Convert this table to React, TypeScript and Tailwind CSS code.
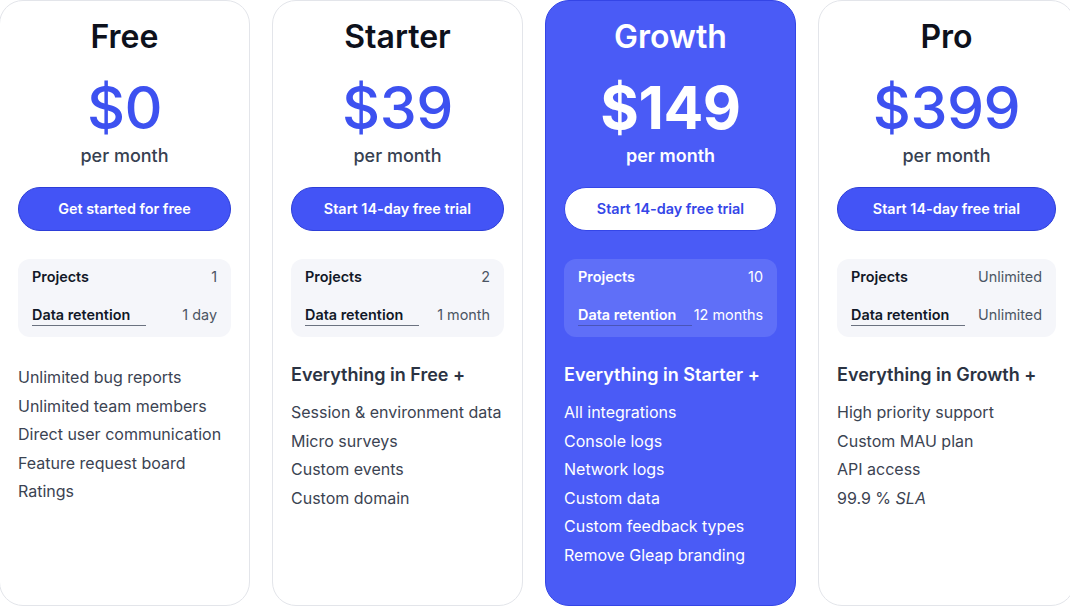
import clsx from 'clsx';

type Plan = {
    name: string;
    price: string;
    cta: string;
    projects: string;
    retention: string;
    heading?: string;
    features: React.ReactNode[];
    featured?: boolean;
    wide?: boolean;
};

const plans: Plan[] = [
    {
        name: "Free",
        price: "$0",
        cta: "Get started for free",
        projects: "1",
        retention: "1 day",
        features: ["Unlimited bug reports", "Unlimited team members", "Direct user communication", "Feature request board", "Ratings"],
    },
    {
        name: "Starter",
        price: "$39",
        cta: "Start 14-day free trial",
        projects: "2",
        retention: "1 month",
        heading: "Everything in Free +",
        features: ["Session & environment data", "Micro surveys", "Custom events", "Custom domain"],
    },
    {
        name: "Growth",
        price: "$149",
        cta: "Start 14-day free trial",
        projects: "10",
        retention: "12 months",
        heading: "Everything in Starter +",
        featured: true,
        features: ["All integrations", "Console logs", "Network logs", "Custom data", "Custom feedback types", "Remove Gleap branding"],
    },
    {
        name: "Pro",
        price: "$399",
        cta: "Start 14-day free trial",
        projects: "Unlimited",
        retention: "Unlimited",
        heading: "Everything in Growth +",
        wide: true,
        features: ["High priority support", "Custom MAU plan", "API access", <>99.9 % <i>SLA</i></>],
    },
];

function PlanCard({ plan }: { plan: Plan }) {
    const f = plan.featured;
    return (
        <div className={clsx("h-[606px] shrink-0 rounded-[24px] border px-[18px] pt-[17px] flex flex-col items-stretch", {
            "bg-[#4a5bf6] border-[#3445e6]": f,
            "bg-white border-[#e3e5ea]": !f,
            "w-[257px]": plan.wide,
            "w-[251px]": !plan.wide,
        })}>
            <h2 className={clsx("text-center text-[32px] leading-[38px] font-semibold", f ? "text-white" : "text-[#0d111c]")}>{plan.name}</h2>
            <div className={clsx("mt-[21px] text-center text-[59px] leading-[62px] tracking-[-0.5px]", f ? "text-white font-bold" : "text-[#3d51f0] font-medium")}>{plan.price}</div>
            <div className={clsx("mt-[5px] text-center text-[18px] leading-[24px]", f ? "text-white font-semibold" : "text-[#374151] font-medium")}>per month</div>
            <button className={clsx("mt-[19px] h-[44px] rounded-full border text-[14.4px] font-semibold", {
                "bg-white text-[#3446e8] border-[#3446e8]": f,
                "bg-[#4354f6] text-white border-[#2d3ed8]": !f,
            })}>{plan.cta}</button>
            <div className={clsx("mt-[28px] rounded-[12px] px-[14px] pt-[8px] pb-[11px] flex flex-col gap-[18px] text-[14.4px] leading-[20px]", f ? "bg-[#5f6ff8]" : "bg-[#f5f6fa]")}>
                <div className="flex justify-between">
                    <span className={clsx("font-semibold", f ? "text-white" : "text-[#111827]")}>Projects</span>
                    <span className={f ? "text-white" : "text-[#4b5563]"}>{plan.projects}</span>
                </div>
                <div className="flex justify-between">
                    <span className={clsx("w-[114px] border-b font-semibold", f ? "text-white border-[#4a55b8]" : "text-[#111827] border-[#6b7280]")}>Data retention</span>
                    <span className={f ? "text-white" : "text-[#4b5563]"}>{plan.retention}</span>
                </div>
            </div>
            {plan.heading ? (
                <>
                    <div className={clsx("mt-[25px] text-[18px] leading-[26px] font-semibold", f ? "text-white" : "text-[#2b3343]")}>{plan.heading}</div>
                    <ul className={clsx("mt-[10px] text-[16px] leading-[28.6px]", f ? "text-white" : "text-[#3b4352]")}>
                        {plan.features.map((x, i) => <li key={i}>{x}</li>)}
                    </ul>
                </>
            ) : (
                <ul className="mt-[26px] text-[16px] leading-[28.5px] text-[#3b4352]">
                    {plan.features.map((x, i) => <li key={i}>{x}</li>)}
                </ul>
            )}
        </div>
    );
}

export default function App() {
    return (
        <div className="w-[1070px] h-[606px] overflow-hidden bg-white" style={{ fontFamily: "Inter, 'Noto Sans', sans-serif" }}>
            <div className="flex gap-[22px] ml-[-1px]">
                {plans.map(p => <PlanCard key={p.name} plan={p} />)}
            </div>
        </div>
    );
}
